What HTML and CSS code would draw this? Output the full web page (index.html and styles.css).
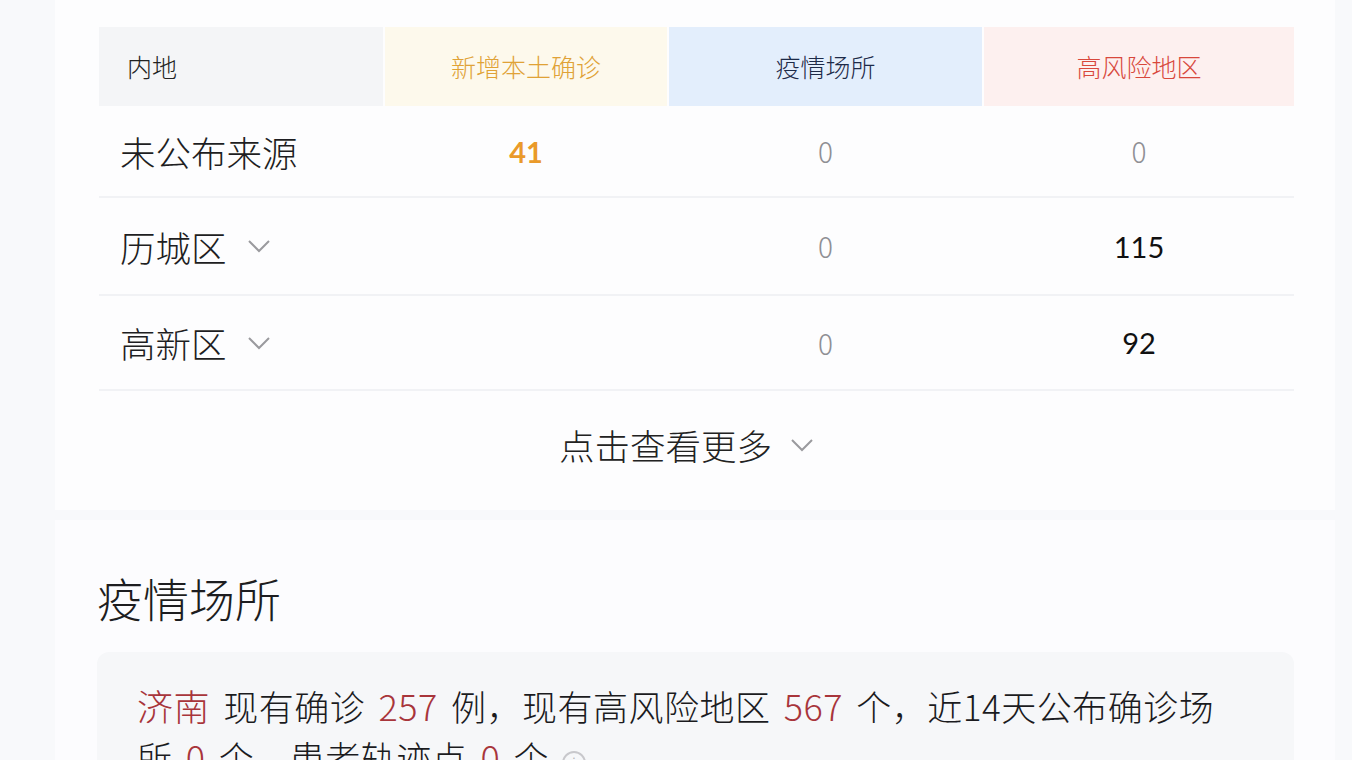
FILE: index.html
```html
<!DOCTYPE html>
<html lang="zh-CN">
<head>
<meta charset="utf-8">
<title>疫情数据</title>
<link rel="stylesheet" href="styles.css">
</head>
<body>
<div class="page">
  <section class="card card-table">
    <div class="table">
      <div class="thead">
        <div class="th th-name">内地</div>
        <div class="th th-new">新增本土确诊</div>
        <div class="th th-place">疫情场所</div>
        <div class="th th-risk">高风险地区</div>
      </div>
      <div class="tr tr-1">
        <div class="td td-name">未公布来源</div>
        <div class="td num num-new">41</div>
        <div class="td num num-zero">0</div>
        <div class="td num num-zero">0</div>
      </div>
      <div class="tr tr-2">
        <div class="td td-name">历城区<svg class="chev" viewBox="0 0 24 14"><path d="M2 2 L12 12 L22 2"/></svg></div>
        <div class="td num"></div>
        <div class="td num num-zero">0</div>
        <div class="td num num-dark">115</div>
      </div>
      <div class="tr tr-3">
        <div class="td td-name">高新区<svg class="chev" viewBox="0 0 24 14"><path d="M2 2 L12 12 L22 2"/></svg></div>
        <div class="td num"></div>
        <div class="td num num-zero">0</div>
        <div class="td num num-dark">92</div>
      </div>
    </div>
    <div class="more">点击查看更多<svg class="chev" viewBox="0 0 24 14"><path d="M2 2 L12 12 L22 2"/></svg></div>
  </section>
  <section class="card card-place">
    <h2 class="title">疫情场所</h2>
    <div class="summary">
      <p class="summary-text"><span class="hl">济南</span> 现有确诊 <span class="hl">257</span> 例，现有高风险地区 <span class="hl">567</span> 个，近14天公布确诊场所 <span class="hl">0</span> 个，患者轨迹点 <span class="hl">0</span> 个 <span class="info">i</span></p>
    </div>
  </section>
</div>
</body>
</html>
```
FILE: styles.css
```css
* { box-sizing: border-box; }
html, body { margin: 0; padding: 0; }
body {
  background: #f8f9fb;
  font-family: "Noto Sans CJK SC", "Noto Sans", sans-serif;
  color: #222;
  width: 1352px;
  height: 760px;
  overflow: hidden;
}
.page {
  padding: 0 17px 0 55px;
}
.card {
  background: #fdfdfe;
}
.card-table {
  padding: 27px 41px 0 44px;
  height: 510px;
}
.table { width: 1195px; }
.thead {
  display: grid;
  grid-template-columns: 284px 282px 313px 310px;
  column-gap: 2px;
  height: 79px;
}
.th {
  display: flex;
  align-items: center;
  justify-content: center;
  font-size: 25px;
  font-weight: 300;
  padding-bottom: 2px;
}
.th-name { background: #f4f5f7; justify-content: flex-start; padding-left: 28px; color: #222; }
.th-new { background: #fdf9ec; color: #e0a236; }
.th-place { background: #e3eefc; color: #1d2a48; }
.th-risk { background: #fdf0ef; color: #d8483c; }
.tr {
  display: grid;
  grid-template-columns: 284px 282px 313px 310px;
  column-gap: 2px;
  border-bottom: 2px solid #f1f2f5;
}
.tr-1 { height: 92px; }
.tr-2 { height: 98px; }
.tr-3 { height: 95px; }
.td {
  display: flex;
  align-items: center;
  justify-content: center;
}
.td-name {
  justify-content: flex-start;
  padding-left: 21px;
  font-size: 35.5px;
  font-weight: 300;
  color: #1e1e22;
}
.chev {
  width: 24px;
  height: 14px;
  margin-left: 20px;
  fill: none;
  stroke: #9a9a9e;
  stroke-width: 2;
}
.num { font-size: 29px; font-family: "Lato", "Noto Sans", sans-serif; }
.num-new { color: #ea9a2a; font-weight: 700; }
.num-zero { color: #8f8f94; font-weight: 300; font-family: "Noto Sans CJK SC", sans-serif; font-size: 28px; }
.num-dark { color: #111; font-weight: 400; }
.more {
  display: flex;
  align-items: center;
  justify-content: center;
  height: 106px;
  font-size: 35.5px;
  font-weight: 300;
  color: #222;
  padding-right: 20px;
}
.more .chev { margin-left: 18px; margin-top: 2px; }
.card-place {
  margin-top: 10px;
  background: #fcfcfe;
  padding: 40px 41px 0 42px;
  height: 300px;
}
.title {
  margin: 0;
  font-size: 46px;
  font-weight: 300;
  color: #1d1d20;
  line-height: 1;
  padding-top: 14px;
}
.summary {
  margin-top: 32px;
  background: #f6f7f9;
  border-radius: 12px;
  padding: 28px 50px 30px 40px;
}
.summary-text {
  margin: 0;
  font-size: 35px;
  font-weight: 300;
  line-height: 51px;
  word-spacing: 5px;
  letter-spacing: 0.5px;
  color: #1b1b1e;
}
.hl { color: #a8353b; font-size: 36px; }
.info {
  display: inline-flex;
  align-items: center;
  justify-content: center;
  width: 24px;
  height: 24px;
  border: 2px solid #c8c8cc;
  border-radius: 50%;
  font-size: 15px;
  color: #b0b0b5;
  vertical-align: middle;
}
```
